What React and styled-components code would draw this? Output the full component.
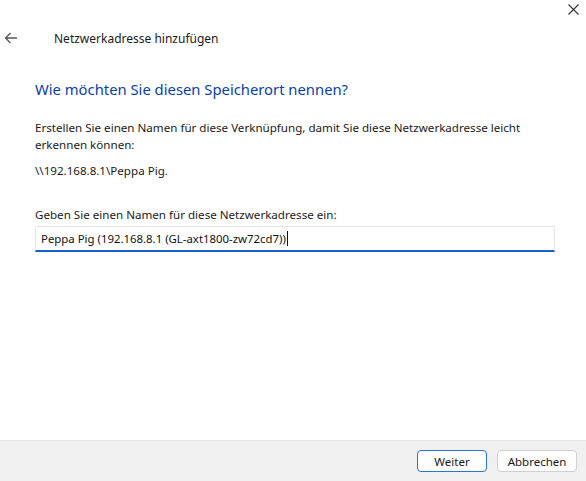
import React from "react";
import styled, { createGlobalStyle } from "styled-components";

const Global = createGlobalStyle`
  html, body {
    margin: 0;
    padding: 0;
    height: 100%;
  }
  body {
    font-family: "Noto Sans", "Liberation Sans", sans-serif;
    color: #1a1a1a;
    background: #ffffff;
  }
  #root {
    height: 100%;
  }
`;

const Window = styled.div`
  width: 586px;
  height: 481px;
  display: flex;
  flex-direction: column;
  background: #ffffff;
  position: relative;
`;

const CloseButton = styled.div`
  position: absolute;
  top: 2px;
  right: 6px;
  width: 14px;
  height: 14px;
  display: flex;
  align-items: center;
  justify-content: center;
  svg {
    display: block;
  }
`;

const Header = styled.div`
  display: flex;
  align-items: center;
  height: 20px;
  margin-top: 28px;
  padding-left: 4px;
`;

const BackArrow = styled.div`
  width: 14px;
  height: 14px;
  display: flex;
  align-items: center;
  svg {
    display: block;
  }
`;

const HeaderTitle = styled.div`
  margin-left: 36px;
  font-size: 12px;
  color: #1a1a1a;
`;

const Body = styled.div`
  flex: 1;
  padding: 28px 31px 0 35px;
  display: flex;
  flex-direction: column;
`;

const Heading = styled.h1`
  margin: 0 0 17px;
  font-size: 14.8px;
  font-weight: 400;
  color: #0a3fa8;
  line-height: 26px;
`;

const Text = styled.p`
  margin: 0 0 ${(p) => p.$gap || 10}px;
  font-size: 11.6px;
  line-height: 17px;
  color: #1a1a1a;
`;

const Label = styled.label`
  display: block;
  font-size: 11.6px;
  line-height: 17px;
  margin-top: 17px;
  margin-bottom: 3px;
`;

const Field = styled.div`
  width: 520px;
  height: 26px;
  box-sizing: border-box;
  border: 1px solid #e3e3e3;
  border-bottom: 2px solid #1660c8;
  border-radius: 2px 2px 0 0;
  display: flex;
  align-items: center;
  padding-left: 5px;
  font-size: 11.4px;
  color: #111;
`;

const Caret = styled.span`
  display: inline-block;
  width: 1px;
  height: 15px;
  background: #111;
  margin-left: 1px;
`;

const Footer = styled.div`
  height: 40px;
  background: #f0f0f0;
  border-top: 1px solid #e6e6e6;
  display: flex;
  align-items: center;
  justify-content: flex-end;
  gap: 10px;
  padding-right: 9px;
`;

const Button = styled.button`
  width: ${(p) => p.$width}px;
  height: 22px;
  box-sizing: border-box;
  background: #fdfdfd;
  border: 1px solid ${(p) => (p.$primary ? "#2b73d6" : "#d0d0d0")};
  border-radius: 4px;
  font-family: "Noto Sans", "Liberation Sans", sans-serif;
  font-size: 11.5px;
  color: #1a1a1a;
  padding: 0;
`;

export default function App() {
  return (
    <>
      <Global />
      <Window>
        <CloseButton>
          <svg width="11" height="11" viewBox="0 0 11 11">
            <path d="M0.5 0.5 L10.5 10.5 M10.5 0.5 L0.5 10.5" stroke="#333" strokeWidth="1.1" />
          </svg>
        </CloseButton>
        <Header>
          <BackArrow>
            <svg width="14" height="12" viewBox="0 0 14 12">
              <path d="M13 6 H1.5 M6.5 1 L1.5 6 L6.5 11" stroke="#555" strokeWidth="1.3" fill="none" />
            </svg>
          </BackArrow>
          <HeaderTitle>Netzwerkadresse hinzufügen</HeaderTitle>
        </Header>
        <Body>
          <Heading>Wie möchten Sie diesen Speicherort nennen?</Heading>
          <Text $gap={9}>
            Erstellen Sie einen Namen für diese Verknüpfung, damit Sie diese Netzwerkadresse leicht
            erkennen können:
          </Text>
          <Text>\\192.168.8.1\Peppa Pig.</Text>
          <Label>Geben Sie einen Namen für diese Netzwerkadresse ein:</Label>
          <Field>
            Peppa Pig (192.168.8.1 (GL-axt1800-zw72cd7))
            <Caret />
          </Field>
        </Body>
        <Footer>
          <Button $primary $width={70}>Weiter</Button>
          <Button $width={80}>Abbrechen</Button>
        </Footer>
      </Window>
    </>
  );
}
